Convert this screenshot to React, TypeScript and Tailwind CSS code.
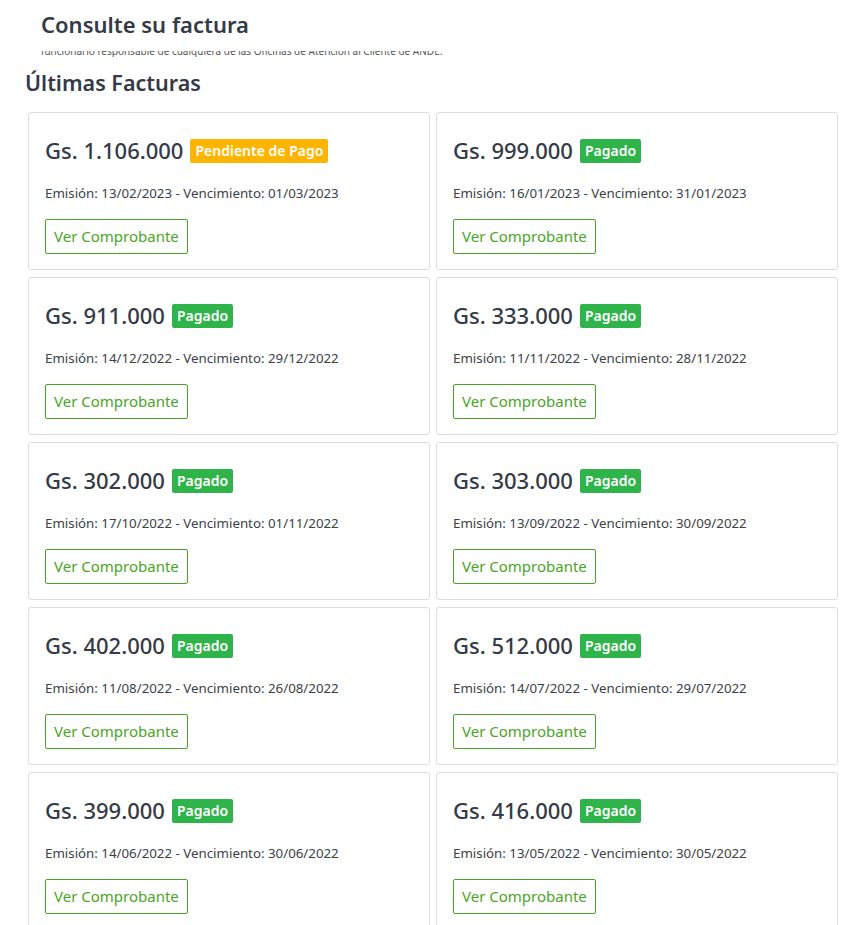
const invoices = [
  { amount: '1.106.000', status: 'pending', emision: '13/02/2023', venc: '01/03/2023' },
  { amount: '999.000', status: 'paid', emision: '16/01/2023', venc: '31/01/2023' },
  { amount: '911.000', status: 'paid', emision: '14/12/2022', venc: '29/12/2022' },
  { amount: '333.000', status: 'paid', emision: '11/11/2022', venc: '28/11/2022' },
  { amount: '302.000', status: 'paid', emision: '17/10/2022', venc: '01/11/2022' },
  { amount: '303.000', status: 'paid', emision: '13/09/2022', venc: '30/09/2022' },
  { amount: '402.000', status: 'paid', emision: '11/08/2022', venc: '26/08/2022' },
  { amount: '512.000', status: 'paid', emision: '14/07/2022', venc: '29/07/2022' },
  { amount: '399.000', status: 'paid', emision: '14/06/2022', venc: '30/06/2022' },
  { amount: '416.000', status: 'paid', emision: '13/05/2022', venc: '30/05/2022' },
];

function InvoiceCard({ amount, status, emision, venc }: (typeof invoices)[number]) {
  const pending = status === 'pending';
  return (
    <div className="border border-[#dcdde2] rounded-[3px] bg-white px-[16px] pt-[16px] pb-[15px]">
      <div className="flex items-center h-[42px] gap-[7px]">
        <span className="text-[22px] font-medium text-[#343a46] leading-none">Gs. {amount}</span>
        <span
          className={`text-[14px] font-semibold text-white rounded-[2px] px-[5px] h-[24px] flex items-center mt-[1px] ${
            pending ? 'bg-[#ffb400]' : 'bg-[#2eb44b]'
          }`}
        >
          {pending ? 'Pendiente de Pago' : 'Pagado'}
        </span>
      </div>
      <p className="mt-[12px] text-[13.3px] leading-[20px] text-[#3a3f48]">
        Emisión: {emision} - Vencimiento: {venc}
      </p>
      <button className="mt-[16px] h-[35px] px-[8px] border border-[#4aa526] rounded-[2px] text-[15px] text-[#4aa526] bg-white">
        Ver Comprobante
      </button>
    </div>
  );
}

export default function App() {
  return (
    <div className="min-h-[925px] bg-white font-['Noto_Sans','Open_Sans',sans-serif] overflow-hidden">
      <h1 className="pl-[41px] pt-[8px] h-[34px] text-[22px] font-semibold leading-[32px] text-[#343a46]">
        Consulte su factura
      </h1>
      <div className="ml-[41px] mt-[17px] h-[6px] overflow-hidden relative">
        <p className="absolute bottom-0 text-[10px] leading-[12px] text-[#555] whitespace-nowrap">
          funcionario responsable de cualquiera de las Oficinas de Atención al Cliente de ANDE.
        </p>
      </div>
      <h2 className="pl-[25px] mt-[11px] text-[21.5px] font-semibold leading-[30px] text-[#343a46]">
        Últimas Facturas
      </h2>
      <div className="grid grid-cols-2 gap-x-[6px] gap-y-[7px] pl-[28px] pr-[7px] mt-[14px]">
        {invoices.map((inv) => (
          <InvoiceCard key={inv.emision} {...inv} />
        ))}
      </div>
    </div>
  );
}
